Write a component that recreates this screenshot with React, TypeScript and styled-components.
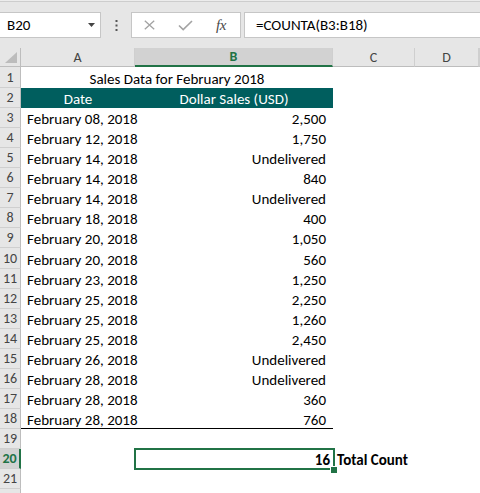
import React from "react";
import styled, { createGlobalStyle } from "styled-components";

const GREEN = "#217346";
const TEAL = "#005e5e";
const FONT = `Carlito, Calibri, Lato, "Liberation Sans", sans-serif`;
const COLS = "21px 114px 198px 82px 64px 1fr";

const GlobalStyle = createGlobalStyle`
  html, body { margin: 0; padding: 0; background: #ffffff; }
  body { font-family: ${FONT}; }
`;

const Page = styled.div`
  width: 480px;
  height: 493px;
  overflow: hidden;
  background: #fff;
  display: flex;
  flex-direction: column;
`;

const FormulaBar = styled.div`
  flex: none;
  height: 48px;
  box-sizing: border-box;
  padding-top: 12px;
  background: linear-gradient(#ececec 0 1px, #cdcdcd 1px 2px, #e6e6e6 2px);
  display: flex;
  align-items: flex-start;
`;

const NameBox = styled.div`
  flex: none;
  box-sizing: border-box;
  width: 102px;
  height: 26px;
  margin-left: -1px;
  background: #fff;
  border: 1px solid #c6c6c6;
  display: flex;
  align-items: center;
  justify-content: space-between;
  padding: 0 5px 0 7px;
  font-size: 15px;
  color: #000;
`;

const DotsSlot = styled.div`
  flex: none;
  width: 30px;
  height: 26px;
  display: flex;
  align-items: center;
  justify-content: center;
`;

const FnBox = styled.div`
  flex: none;
  box-sizing: border-box;
  width: 110px;
  height: 26px;
  background: #fff;
  border: 1px solid #c6c6c6;
  display: flex;
  align-items: center;
  padding-left: 12px;
  gap: 23px;
`;

const FxLabel = styled.span`
  font-family: "Liberation Serif", serif;
  font-style: italic;
  font-size: 15px;
  color: #4a4a4a;
  letter-spacing: -0.5px;
`;

const FormulaInput = styled.div`
  flex: 1;
  box-sizing: border-box;
  height: 26px;
  margin-left: 3px;
  margin-right: -2px;
  background: #fff;
  border: 1px solid #c6c6c6;
  display: flex;
  align-items: center;
  padding-left: 11px;
  font-size: 15px;
  color: #000;
`;

const Sheet = styled.div`
  flex: 1;
  display: flex;
  flex-direction: column;
  overflow: hidden;
`;

const Row = styled.div<{ $h: number }>`
  flex: none;
  display: grid;
  grid-template-columns: ${COLS};
  height: ${(p) => p.$h}px;
`;

const Corner = styled.div`
  box-sizing: border-box;
  background: #e6e6e6;
  border-right: 1px solid #bdbdbd;
  border-bottom: 1px solid #bdbdbd;
  display: flex;
  align-items: flex-end;
  justify-content: flex-end;
  padding: 0 3px 3px 0;
`;

const ColHead = styled.div<{ $active?: boolean }>`
  box-sizing: border-box;
  display: flex;
  align-items: center;
  justify-content: center;
  background: ${(p) => (p.$active ? "#d2d2d2" : "#e6e6e6")};
  border-right: 1px solid #cfcfcf;
  border-bottom: ${(p) => (p.$active ? `2px solid ${GREEN}` : "1px solid #bdbdbd")};
  color: ${(p) => (p.$active ? GREEN : "#444")};
  font-size: 14px;
  font-weight: ${(p) => (p.$active ? 700 : 400)};
`;

const RowHead = styled.div<{ $active?: boolean }>`
  box-sizing: border-box;
  display: flex;
  align-items: center;
  justify-content: center;
  background: ${(p) => (p.$active ? "#d2d2d2" : "#e6e6e6")};
  border-right: ${(p) => (p.$active ? `2px solid ${GREEN}` : "1px solid #bdbdbd")};
  border-bottom: 1px solid #cfcfcf;
  color: ${(p) => (p.$active ? GREEN : "#444")};
  font-size: 14px;
  font-weight: ${(p) => (p.$active ? 700 : 400)};
`;

type Align = "left" | "center" | "right";

const Cell = styled.div<{
  $align?: Align;
  $pl?: number;
  $pr?: number;
  $bold?: boolean;
  $fill?: string;
  $ink?: string;
  $rule?: boolean;
  $span?: number;
}>`
  position: relative;
  box-sizing: border-box;
  min-width: 0;
  display: flex;
  align-items: flex-end;
  justify-content: ${(p) =>
    p.$align === "right" ? "flex-end" : p.$align === "center" ? "center" : "flex-start"};
  padding: 0 ${(p) => p.$pr ?? 0}px 0 ${(p) => p.$pl ?? 0}px;
  grid-column: span ${(p) => p.$span ?? 1};
  background: ${(p) => p.$fill ?? "transparent"};
  color: ${(p) => p.$ink ?? "#000"};
  font-size: 15px;
  line-height: 18px;
  font-weight: ${(p) => (p.$bold ? 700 : 400)};
  white-space: nowrap;
  box-shadow: ${(p) => (p.$rule ? "inset 0 -1px 0 #000" : "none")};
`;

const Selection = styled.div`
  position: absolute;
  top: -1px;
  left: -1px;
  right: -2px;
  bottom: -1px;
  border: 2px solid ${GREEN};
  pointer-events: none;
`;

const FillHandle = styled.div`
  position: absolute;
  right: -4px;
  bottom: -4px;
  width: 6px;
  height: 6px;
  background: ${GREEN};
  box-shadow: 0 0 0 1px #fff;
`;

const data: [string, string, number][] = [
  ["February 08, 2018", "2,500", 20],
  ["February 12, 2018", "1,750", 20],
  ["February 14, 2018", "Undelivered", 20],
  ["February 14, 2018", "840", 20],
  ["February 14, 2018", "Undelivered", 20],
  ["February 18, 2018", "400", 20],
  ["February 20, 2018", "1,050", 20],
  ["February 20, 2018", "560", 21],
  ["February 23, 2018", "1,250", 20],
  ["February 25, 2018", "2,250", 20],
  ["February 25, 2018", "1,260", 20],
  ["February 25, 2018", "2,450", 20],
  ["February 26, 2018", "Undelivered", 20],
  ["February 28, 2018", "Undelivered", 20],
  ["February 28, 2018", "360", 20],
  ["February 28, 2018", "760", 20],
];

const Caret = () => (
  <svg width="7" height="4" viewBox="0 0 7 4">
    <polygon points="0,0 7,0 3.5,4" fill="#444" />
  </svg>
);

const Dots = () => (
  <svg width="3" height="11" viewBox="0 0 3 11">
    <rect x="0.5" y="0" width="2" height="2" fill="#555" />
    <rect x="0.5" y="4.5" width="2" height="2" fill="#555" />
    <rect x="0.5" y="9" width="2" height="2" fill="#555" />
  </svg>
);

const CancelIcon = () => (
  <svg width="11" height="10" viewBox="0 0 11 10">
    <path d="M0.8 0.8 L10.2 9.2 M10.2 0.8 L0.8 9.2" stroke="#a3a3a3" strokeWidth="1.3" fill="none" />
  </svg>
);

const EnterIcon = () => (
  <svg width="15" height="11" viewBox="0 0 15 11">
    <path d="M1 5.5 L5.2 9.6 L14 1" stroke="#a3a3a3" strokeWidth="1.6" fill="none" />
  </svg>
);

const CornerMark = () => (
  <svg width="12" height="11" viewBox="0 0 12 11">
    <polygon points="12,0 12,11 0,11" fill="#bcbcbc" />
  </svg>
);

export default function App() {
  return (
    <>
      <GlobalStyle />
      <Page>
        <FormulaBar>
          <NameBox>
            <span>B20</span>
            <Caret />
          </NameBox>
          <DotsSlot>
            <Dots />
          </DotsSlot>
          <FnBox>
            <CancelIcon />
            <EnterIcon />
            <FxLabel>fx</FxLabel>
          </FnBox>
          <FormulaInput>=COUNTA(B3:B18)</FormulaInput>
        </FormulaBar>
        <Sheet>
          <Row $h={19}>
            <Corner>
              <CornerMark />
            </Corner>
            <ColHead>A</ColHead>
            <ColHead $active>B</ColHead>
            <ColHead>C</ColHead>
            <ColHead>D</ColHead>
            <ColHead />
          </Row>
          <Row $h={21}>
            <RowHead>1</RowHead>
            <Cell $span={2} $align="center">
              Sales Data for February 2018
            </Cell>
          </Row>
          <Row $h={20}>
            <RowHead>2</RowHead>
            <Cell $align="center" $fill={TEAL} $ink="#fff">
              Date
            </Cell>
            <Cell $align="center" $fill={TEAL} $ink="#fff">
              Dollar Sales (USD)
            </Cell>
          </Row>
          {data.map(([date, amount, h], i) => (
            <Row key={i} $h={h}>
              <RowHead>{i + 3}</RowHead>
              <Cell $pl={6} $rule={i === data.length - 1}>
                {date}
              </Cell>
              <Cell $align="right" $pr={7} $rule={i === data.length - 1}>
                {amount}
              </Cell>
            </Row>
          ))}
          <Row $h={20}>
            <RowHead>19</RowHead>
          </Row>
          <Row $h={20}>
            <RowHead $active>20</RowHead>
            <Cell />
            <Cell $align="right" $pr={3} $bold>
              16
              <Selection />
              <FillHandle />
            </Cell>
            <Cell $pl={4} $bold>
              Total Count
            </Cell>
          </Row>
          <Row $h={20}>
            <RowHead>21</RowHead>
          </Row>
          <Row $h={20}>
            <RowHead />
          </Row>
        </Sheet>
      </Page>
    </>
  );
}
